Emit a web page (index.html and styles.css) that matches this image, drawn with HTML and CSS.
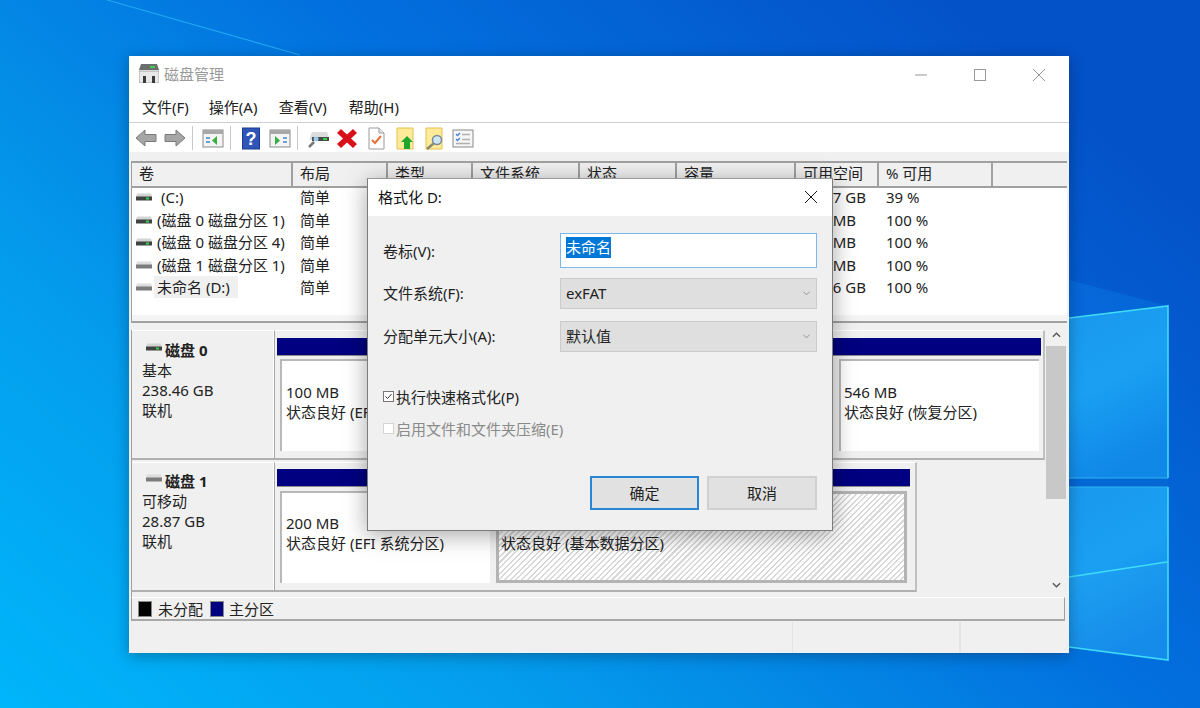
FILE: index.html
```html
<!DOCTYPE html>
<html lang="zh-CN">
<head>
    <meta charset="UTF-8">
    <title>磁盘管理</title>
    <link rel="stylesheet" href="styles.css">
</head>
<body>
    <svg class="wallpaper" viewBox="0 0 1200 708" aria-hidden="true">
        <defs>
            <linearGradient id="sky" x1="0" y1="1" x2="1" y2="0.3">
                <stop offset="0" stop-color="#00b6fb"/>
                <stop offset="0.3" stop-color="#049cec"/>
                <stop offset="0.65" stop-color="#0270de"/>
                <stop offset="1" stop-color="#0452c8"/>
            </linearGradient>
            <linearGradient id="pane" x1="0" y1="0" x2="0.3" y2="1">
                <stop offset="0" stop-color="#1a98ee"/>
                <stop offset="0.5" stop-color="#1aa0f2"/>
                <stop offset="1" stop-color="#1088e8"/>
            </linearGradient>
            <symbol id="drive-green" viewBox="0 0 16 10">
                <path d="M1 1.5h14l1 3.5H0z" fill="#d4d4d4"/>
                <rect x="0" y="4.5" width="16" height="4" fill="#3f4442"/>
                <rect x="10" y="5.5" width="3" height="2" fill="#38d048"/>
            </symbol>
            <symbol id="drive-grey" viewBox="0 0 16 10">
                <path d="M1 1.5h14l1 3.5H0z" fill="#dcdcdc"/>
                <rect x="0" y="4.5" width="16" height="4" fill="#7c7c7c"/>
            </symbol>
        </defs>
        <rect width="1200" height="708" fill="url(#sky)"/>
        <path d="M107 0L300 55" stroke="#1ea6f3" stroke-width="1.2" fill="none"/>
        <path d="M1069 280L1165 305L1069 317z" fill="#0a74e4" opacity="0.5"/>
        <path d="M1069 318L1168 306V478H1069z" fill="url(#pane)"/>
        <path d="M1069 487H1168V660L1069 647z" fill="url(#pane)"/>
        <rect x="1069" y="478" width="99" height="9" fill="#0468d4"/>
        <path d="M1069 577L1167 562V660L1069 647z" fill="#2ea0f0" opacity="0.2"/>
        <path d="M1069 318L1168 306V478M1168 487V660L1069 647M1069 577L1167 562" stroke="#3fdcf8" stroke-width="1.6" fill="none"/>
        <path d="M1069 478H1168M1069 487H1168" stroke="#30b4f0" stroke-width="1" fill="none"/>
    </svg>

    <div class="window">
        <div class="titlebar">
            <svg class="app-icon" viewBox="0 0 20 19">
                <path d="M2 0h16l2 6H0z" fill="#6a6e6c"/>
                <rect x="11" y="2" width="5" height="2" fill="#3fd050"/>
                <path d="M0 7h20v11a1 1 0 0 1-1 1H1a1 1 0 0 1-1-1z" fill="#e8e8e8" stroke="#777" stroke-width="0.6"/>
                <rect x="4" y="12" width="3" height="7" fill="#3a3a3a"/>
                <rect x="13" y="12" width="3" height="7" fill="#3a3a3a"/>
            </svg>
            <span class="app-title">磁盘管理</span>
            <div class="window-controls">
                <svg class="win-btn" viewBox="0 0 12 12"><path d="M0 6H12" stroke="#999" fill="none"/></svg>
                <svg class="win-btn" viewBox="0 0 12 12"><rect x="0.5" y="0.5" width="11" height="11" stroke="#999" fill="none"/></svg>
                <svg class="win-btn" viewBox="0 0 12 12"><path d="M0 0L12 12M12 0L0 12" stroke="#999" fill="none"/></svg>
            </div>
        </div>

        <nav class="menubar">
            <a>文件(F)</a>
            <a>操作(A)</a>
            <a>查看(V)</a>
            <a>帮助(H)</a>
        </nav>

        <div class="toolbar">
            <svg class="tool" viewBox="0 0 24 24"><path d="M2 12L11 4V8.500H22V15.500H11V20z" fill="#a6a6a6" stroke="#7a7a7a"/></svg>
            <svg class="tool" viewBox="0 0 24 24"><path d="M22 12L13 4V8.500H2V15.500H13V20z" fill="#a6a6a6" stroke="#7a7a7a"/></svg>
            <span class="tool-sep"></span>
            <svg class="tool" viewBox="0 0 24 24">
                <rect x="2" y="4" width="20" height="17" fill="#f4f4f4" stroke="#8a8a8a"/>
                <rect x="2" y="4" width="20" height="4" fill="#a8a8a8"/>
                <path d="M5 11h4v2H5zM5 15h4v2H5z" fill="#6fa0d8"/>
                <path d="M16 10V19L11 14.500z" fill="#35b040"/>
            </svg>
            <span class="tool-sep"></span>
            <svg class="tool" viewBox="0 0 24 24">
                <rect x="3.500" y="2" width="17" height="21" fill="#2f55b8" stroke="#1c3a90"/>
                <text x="12" y="19" class="help-mark">?</text>
            </svg>
            <svg class="tool" viewBox="0 0 24 24">
                <rect x="2" y="4" width="20" height="17" fill="#f4f4f4" stroke="#8a8a8a"/>
                <rect x="2" y="4" width="20" height="4" fill="#a8a8a8"/>
                <path d="M15 11h4v2h-4zM15 15h4v2h-4z" fill="#6fa0d8"/>
                <path d="M7 10V19L12 14.500z" fill="#35b040"/>
            </svg>
            <span class="tool-sep"></span>
            <svg class="tool" viewBox="0 0 24 24">
                <path d="M6 6h15l2 5v3H4V11z" fill="#dcdcdc"/>
                <rect x="6" y="11" width="17" height="4" fill="#474c4a"/>
                <rect x="17" y="12" width="4" height="2" fill="#38d048"/>
                <circle cx="10" cy="13" r="2.500" fill="#9ccbee"/>
                <path d="M8 16L3 21" stroke="#777" stroke-width="2.500"/>
            </svg>
            <svg class="tool" viewBox="0 0 24 24"><path d="M6 3L12 8.500L18 3L22 7L16 12.500L22 18L18 22L12 16.500L6 22L2 18L8 12.500L2 7z" fill="#d8101a"/></svg>
            <svg class="tool" viewBox="0 0 24 24">
                <path d="M5 2H15L20 7V23H5z" fill="#fff" stroke="#9a9a9a"/>
                <path d="M15 2V7H20" fill="#e8e8e8" stroke="#9a9a9a"/>
                <path d="M8 14L11 17L17 10" stroke="#e8703a" stroke-width="2" fill="none"/>
            </svg>
            <svg class="tool" viewBox="0 0 24 24">
                <path d="M4 2H20V23H4z" fill="#fdeb9a" stroke="#e6c050"/>
                <path d="M14 10L20 16H17V23H11V16H8z" fill="#1fa52c"/>
            </svg>
            <svg class="tool" viewBox="0 0 24 24">
                <path d="M4 2H20V23H4z" fill="#fdeb9a" stroke="#e6c050"/>
                <circle cx="15" cy="14" r="4.500" fill="#cfe6f5" stroke="#7a8a94" stroke-width="1.500"/>
                <path d="M11.500 17.500L5 23" stroke="#8a8a70" stroke-width="2.500"/>
            </svg>
            <svg class="tool" viewBox="0 0 24 24">
                <rect x="2" y="4" width="20" height="17" fill="#f6f6f6" stroke="#8a8a8a"/>
                <path d="M5 8l1.500 1.500L9 7M5 13l1.500 1.500L9 12" stroke="#3a80d8" stroke-width="1.300" fill="none"/>
                <path d="M11 8.500h8M11 13.500h8M5 17.500h14" stroke="#b0b0b0" stroke-width="1.500"/>
            </svg>
        </div>

        <div class="volume-list">
            <div class="vol-grid vol-head">
                <span>卷</span>
                <span>布局</span>
                <span>类型</span>
                <span>文件系统</span>
                <span>状态</span>
                <span>容量</span>
                <span>可用空间</span>
                <span>% 可用</span>
                <span></span>
            </div>
            <div class="vol-body">
                <div class="vol-grid vol-row">
                    <span class="vol-name"><svg class="drive"><use href="#drive-green"/></svg><b class="vol-label c-drive">(C:)</b></span>
                    <span>简单</span><span></span><span></span><span></span><span></span>
                    <span class="free">92.07 GB</span><span>39 %</span><span></span>
                </div>
                <div class="vol-grid vol-row">
                    <span class="vol-name"><svg class="drive"><use href="#drive-green"/></svg><b class="vol-label">(磁盘 0 磁盘分区 1)</b></span>
                    <span>简单</span><span></span><span></span><span></span><span></span>
                    <span class="free">100 MB</span><span>100 %</span><span></span>
                </div>
                <div class="vol-grid vol-row">
                    <span class="vol-name"><svg class="drive"><use href="#drive-green"/></svg><b class="vol-label">(磁盘 0 磁盘分区 4)</b></span>
                    <span>简单</span><span></span><span></span><span></span><span></span>
                    <span class="free">546 MB</span><span>100 %</span><span></span>
                </div>
                <div class="vol-grid vol-row">
                    <span class="vol-name"><svg class="drive"><use href="#drive-grey"/></svg><b class="vol-label">(磁盘 1 磁盘分区 1)</b></span>
                    <span>简单</span><span></span><span></span><span></span><span></span>
                    <span class="free">200 MB</span><span>100 %</span><span></span>
                </div>
                <div class="vol-grid vol-row">
                    <span class="vol-name"><svg class="drive"><use href="#drive-grey"/></svg><b class="vol-label selected">未命名 (D:)</b></span>
                    <span>简单</span><span></span><span></span><span></span><span></span>
                    <span class="free">28.66 GB</span><span>100 %</span><span></span>
                </div>
            </div>
            <div class="list-hscroll"></div>
        </div>

        <div class="disk-pane">
            <div class="disk-scroll-area">
                <div class="disk disk-0">
                    <div class="disk-info">
                        <div class="disk-name"><svg class="drive"><use href="#drive-green"/></svg>磁盘 0</div>
                        <div>基本</div>
                        <div>238.46 GB</div>
                        <div>联机</div>
                    </div>
                    <div class="disk-map">
                        <div class="map-bar"></div>
                        <div class="parts">
                            <div class="part part-efi0">
                                <div>100 MB</div>
                                <div>状态良好 (EFI 系统分区)</div>
                            </div>
                            <div class="part part-recovery">
                                <div>546 MB</div>
                                <div>状态良好 (恢复分区)</div>
                            </div>
                        </div>
                    </div>
                </div>
                <div class="disk disk-1">
                    <div class="disk-info">
                        <div class="disk-name"><svg class="drive"><use href="#drive-grey"/></svg>磁盘 1</div>
                        <div>可移动</div>
                        <div>28.87 GB</div>
                        <div>联机</div>
                    </div>
                    <div class="disk-map">
                        <div class="map-bar"></div>
                        <div class="parts">
                            <div class="part part-efi1">
                                <div>200 MB</div>
                                <div>状态良好 (EFI 系统分区)</div>
                            </div>
                            <div class="part part-data">
                                <div>28.66 GB exFAT</div>
                                <div>状态良好 (基本数据分区)</div>
                            </div>
                        </div>
                    </div>
                </div>
            </div>
            <div class="scrollbar">
                <svg class="scroll-arrow arrow-up" viewBox="0 0 10 6"><path d="M1 5L5 1L9 5" stroke="#555" stroke-width="1.500" fill="none"/></svg>
                <div class="scroll-track"><div class="scroll-thumb"></div></div>
                <svg class="scroll-arrow arrow-down" viewBox="0 0 10 6"><path d="M1 1L5 5L9 1" stroke="#555" stroke-width="1.500" fill="none"/></svg>
            </div>
        </div>

        <div class="legend">
            <span class="swatch swatch-black"></span><span>未分配</span>
            <span class="swatch swatch-navy"></span><span>主分区</span>
        </div>

        <div class="statusbar">
            <span class="status-cell status-main"></span>
            <span class="status-cell status-mid"></span>
            <span class="status-cell"></span>
        </div>
    </div>

    <div class="dialog">
        <div class="dialog-title">
            <span>格式化 D:</span>
            <svg class="dialog-close" viewBox="0 0 12 12"><path d="M0 0L12 12M12 0L0 12" stroke="#111" fill="none"/></svg>
        </div>
        <div class="dialog-body">
            <div class="form-row row-label">
                <label>卷标(V):</label>
                <div class="text-field"><span class="text-selected">未命名</span></div>
            </div>
            <div class="form-row row-fs">
                <label>文件系统(F):</label>
                <div class="select-field"><span>exFAT</span><svg class="chevron" viewBox="0 0 8 5"><path d="M0.500 0.500L4 4L7.500 0.500" stroke="#888" fill="none"/></svg></div>
            </div>
            <div class="form-row row-alloc">
                <label>分配单元大小(A):</label>
                <div class="select-field"><span>默认值</span><svg class="chevron" viewBox="0 0 8 5"><path d="M0.500 0.500L4 4L7.500 0.500" stroke="#888" fill="none"/></svg></div>
            </div>
            <div class="check-row check-quick">
                <svg class="checkbox" viewBox="0 0 11 11"><rect x="0.500" y="0.500" width="10" height="10" fill="#fff" stroke="#777"/><path d="M2.500 5.500L4.500 7.500L8.500 3" stroke="#333" fill="none"/></svg>
                <span>执行快速格式化(P)</span>
            </div>
            <div class="check-row check-compress">
                <span class="checkbox checkbox-off"></span>
                <span>启用文件和文件夹压缩(E)</span>
            </div>
            <div class="dialog-buttons">
                <button class="btn btn-default">确定</button>
                <button class="btn">取消</button>
            </div>
        </div>
    </div>
</body>
</html>
```

FILE: styles.css
```css
* {
    box-sizing: border-box;
}

body {
    margin: 0;
    width: 1200px;
    height: 708px;
    overflow: hidden;
    position: relative;
    font-family: "Noto Sans", "Noto Sans CJK SC", sans-serif;
    font-size: 15px;
    color: #222;
}

.wallpaper {
    position: absolute;
    left: 0;
    top: 0;
    width: 1200px;
    height: 708px;
}

/* main window */
.window {
    position: absolute;
    left: 129px;
    top: 56px;
    width: 940px;
    height: 597px;
    background-color: #f0f0f0;
    box-shadow: 0 3px 14px rgba(0, 0, 0, 0.3);
    display: flex;
    flex-direction: column;
}

.titlebar {
    height: 36px;
    background-color: #fff;
    display: flex;
    align-items: center;
    padding-left: 10px;
    flex-shrink: 0;
}

.app-icon {
    width: 20px;
    height: 19px;
    margin-top: -1px;
}

.app-title {
    margin-left: 5px;
    color: #999;
    line-height: 36px;
}

.window-controls {
    margin-left: auto;
    display: flex;
    margin: 2px 24px 0 auto;
    gap: 47px;
    align-items: center;
}

.win-btn {
    width: 12px;
    height: 12px;
}

.menubar {
    height: 30px;
    background-color: #fff;
    display: flex;
    gap: 20px;
    padding-left: 13px;
    line-height: 30px;
    flex-shrink: 0;
}

.menubar a:not(:first-child) {
    min-width: 50px;
}

.toolbar {
    height: 30px;
    background-color: #fff;
    border-top: 1px solid #d0d0d0;
    display: flex;
    align-items: center;
    gap: 5px;
    padding-left: 5px;
    flex-shrink: 0;
}

.tool {
    width: 24px;
    height: 24px;
    flex-shrink: 0;
}

.tool-sep {
    width: 1px;
    height: 24px;
    background-color: #c8c8c8;
    margin-right: 3px;
}

.help-mark {
    font-family: "Liberation Sans", sans-serif;
    font-size: 18px;
    font-weight: bold;
    fill: #fff;
    text-anchor: middle;
}

/* volume table */
.volume-list {
    margin: 9px 2px 0 2px;
    height: 162px;
    border-left: 1px solid #a0a0a0;
    flex-shrink: 0;
    display: flex;
    flex-direction: column;
    background-color: #fff;
}

.vol-grid {
    display: grid;
    grid-template-columns: 161px 95px 85px 107px 97px 119px 83px 114px 1fr;
}

.vol-head {
    height: 27px;
    border-top: 2px solid #a0a0a0;
    border-bottom: 2px solid #a0a0a0;
    background-color: #f0f0f0;
    line-height: 20px;
}

.vol-head span {
    padding-left: 7px;
    border-right: 2px solid #a0a0a0;
}

.vol-head span:last-child {
    border-right: 0;
}

.vol-body {
    flex: 1;
}

.vol-row {
    height: 22.5px;
    line-height: 18px;
}

.vol-row span {
    padding-left: 7px;
    white-space: nowrap;
    overflow: hidden;
}

.vol-row .vol-name {
    display: flex;
    align-items: center;
    height: 18px;
    padding-left: 4px;
    overflow: visible;
}

.drive {
    width: 16px;
    height: 10px;
    flex-shrink: 0;
}

.vol-label {
    font-weight: normal;
    margin-left: 5px;
}

.c-drive {
    margin-left: 9px;
}

.selected {
    background-color: #f0f0f0;
    line-height: 22px;
    margin-left: 2px;
    padding: 0 8px 0 3px;
}

.list-hscroll {
    height: 8px;
    background-color: #f4f4f4;
    border-bottom: 2px solid #a0a0a0;
}

/* disk map */
.disk-pane {
    margin: 7px 2px 0 2px;
    height: 267px;
    border-left: 1px solid #a0a0a0;
    display: flex;
    flex-shrink: 0;
}

.disk-scroll-area {
    flex: 1;
    min-width: 0;
}

.disk {
    display: flex;
    height: 130px;
    margin-bottom: 2px;
}

.disk-info {
    width: 143px;
    height: 130px;
    padding: 9px 0 0 10px;
    line-height: 20px;
    border-top: 1px solid #fff;
    border-right: 1px solid #a8a8a8;
    border-bottom: 2px solid #b0b0b0;
    box-shadow: inset -1px 0 0 #fff;
    flex-shrink: 0;
}

.disk-1 .disk-info {
    padding-top: 8px;
}

.disk-name {
    font-weight: bold;
    display: flex;
    align-items: center;
    margin-left: 4px;
    gap: 3px;
}

.disk-name .drive {
    margin-top: -6px;
}

.disk-map {
    padding: 7px 0 0 2px;
    border-top: 1px solid #fff;
    border-right: 2px solid #c0c0c0;
    border-bottom: 2px solid #b0b0b0;
}

.disk-0 .disk-map {
    width: 770px;
}

.disk-1 .disk-map {
    width: 642px;
    padding-top: 6px;
}

.map-bar {
    height: 18px;
    background-color: #000080;
    border-bottom: 1px solid #8c8c8c;
    margin-right: 2px;
}

.disk-1 .map-bar {
    margin-right: 5px;
}

.parts {
    display: flex;
    margin-top: 3px;
}

.disk-1 .parts {
    margin-top: 4px;
}

.part {
    height: 92px;
    background-color: #fff;
    border-top: 2px solid #b8b8b8;
    border-left: 2px solid #b8b8b8;
    padding: 21px 0 0 3px;
    line-height: 20px;
    white-space: nowrap;
    overflow: hidden;
}

/* cut at the dialog's edge, the rest of this partition lies behind it */
.part-efi0 {
    margin-left: 3px;
    width: 87px;
    padding-left: 4px;
}

.part-recovery {
    margin-left: 472px;
    width: 200px;
}

.part-efi1 {
    margin-left: 3px;
    width: 210px;
    padding: 20px 0 0 4px;
}

.part-data {
    margin-left: 6px;
    width: 411px;
    border: 3px solid #b4b4b4;
    padding-left: 2px;
    padding-top: 19px;
    background-color: #fff;
    background-image: repeating-linear-gradient(135deg, #d8d8d8 0, #d8d8d8 1.5px, #fff 1.5px, #fff 4px);
}

.scrollbar {
    width: 20px;
    display: flex;
    flex-direction: column;
    align-items: center;
    height: 267px;
    flex-shrink: 0;
    margin-right: 1px;
}

.scroll-arrow {
    width: 9px;
    height: 6px;
    flex-shrink: 0;
}

.arrow-up {
    margin: 2px 0 8px;
}

.arrow-down {
    margin-bottom: 9px;
}

.scroll-track {
    flex: 1;
    width: 100%;
}

.scroll-thumb {
    width: 100%;
    height: 153px;
    background-color: #c8c8c8;
}

.legend {
    margin: 0 4px 0 2px;
    height: 24px;
    display: flex;
    align-items: center;
    padding-left: 6px;
    border-left: 1px solid #a0a0a0;
    border-top: 1px solid #fff;
    border-right: 1px solid #a0a0a0;
    border-bottom: 2px solid #a8a8a8;
    flex-shrink: 0;
    white-space: nowrap;
}

.swatch {
    width: 14px;
    height: 16px;
    margin-right: 5px;
    border: 1px solid #888;
}

.swatch-black {
    background-color: #000;
    margin-right: 6px;
}

.swatch-navy {
    background-color: #000080;
    margin-left: 7px;
}

.statusbar {
    flex: 1;
    display: flex;
    margin-top: 1px;
}

.status-cell {
    display: block;
    border-right: 1px solid #e4e4e4;
}

.status-main {
    width: 664px;
}

.status-mid {
    width: 167px;
}

/* format dialog */
.dialog {
    position: absolute;
    left: 367px;
    top: 178px;
    width: 466px;
    height: 353px;
    background-color: #f0f0f0;
    border: 1px solid #7c7c7c;
    border-top-color: #999;
    box-shadow: 0 4px 22px rgba(0, 0, 0, 0.35);
    display: flex;
    flex-direction: column;
}

.dialog-title {
    height: 37px;
    background-color: #fff;
    display: flex;
    align-items: center;
    justify-content: space-between;
    padding: 0 15px 3px 10px;
    color: #111;
    flex-shrink: 0;
}

.dialog-close {
    width: 12px;
    height: 12px;
    margin-top: 2px;
}

.dialog-body {
    flex: 1;
    padding: 17px 15px 20px 15px;
    display: flex;
    flex-direction: column;
}

.form-row {
    display: flex;
    align-items: center;
}

.form-row label {
    width: 177px;
    flex-shrink: 0;
}

.row-fs label,
.row-alloc label,
.select-field span {
    padding-bottom: 2px;
}

.text-field {
    width: 257px;
    height: 35px;
    background-color: #fff;
    border: 1px solid #7ab8ee;
    padding: 3px 0 0 5px;
    line-height: 21px;
}

.text-selected {
    display: inline-block;
    background-color: #0078d7;
    color: #fff;
}

.select-field {
    width: 257px;
    height: 31px;
    background-color: #dfdfdf;
    border: 1px solid #cbcbcb;
    display: flex;
    align-items: center;
    justify-content: space-between;
    padding: 0 6px 0 5px;
}

.chevron {
    width: 7px;
    height: 5px;
}

.row-fs {
    margin-top: 10px;
}

.row-alloc {
    margin-top: 12px;
}

.check-row {
    display: flex;
    align-items: center;
    height: 22px;
    gap: 2px;
}

.checkbox {
    width: 11px;
    height: 11px;
    flex-shrink: 0;
    display: block;
}

.checkbox-off {
    background-color: #fff;
    border: 1px solid #d4d4d4;
}

.check-quick {
    margin-top: 33px;
}

.check-compress {
    margin-top: 10px;
    color: #8a8a8a;
}

.dialog-buttons {
    margin-top: auto;
    display: flex;
    justify-content: flex-end;
    gap: 8px;
}

.btn {
    width: 110px;
    height: 34px;
    background-color: #e1e1e1;
    border: 2px solid #d0d0d0;
    font-family: inherit;
    font-size: 15px;
    color: #222;
    padding: 0 0 1px;
}

.btn-default {
    width: 109px;
    border: 2px solid #2a86d4;
}
```
